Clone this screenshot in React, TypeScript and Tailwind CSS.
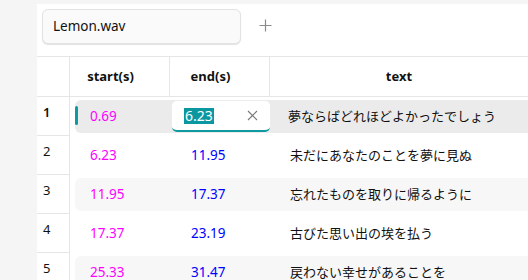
import React from 'react'

const rows = [
  { start: '0.69', end: '6.23', text: '夢ならばどれほどよかったでしょう' },
  { start: '6.23', end: '11.95', text: '未だにあなたのことを夢に見ぬ' },
  { start: '11.95', end: '17.37', text: '忘れたものを取りに帰るように' },
  { start: '17.37', end: '23.19', text: '古びた思い出の埃を払う' },
  { start: '25.33', end: '31.47', text: '戻わない幸せがあることを' },
]

const font = { fontFamily: '"Noto Sans", "Noto Sans CJK JP", sans-serif' }

const EditCell = ({ value }: { value: string }) => (
  <div className="w-[98px] h-[31px] ml-[2px] mr-[-2px] bg-white rounded-[5px] border-b-2 border-[#0e9a9f] shadow-[0_0_0_1px_#ececec] flex items-center pl-[12px] pr-[12px]">
    <span className="bg-[#0a97a0] text-white text-[14px] leading-[16px] px-[1px]">{value}</span>
    <svg className="ml-auto" width="11" height="11" viewBox="0 0 11 11">
      <path d="M1 1 L10 10 M10 1 L1 10" stroke="#777" strokeWidth="1.1" />
    </svg>
  </div>
)

export default function App() {
  return (
    <div className="w-[528px] h-[280px] flex bg-[#f5f5f5] overflow-hidden text-[#111]" style={font}>
      <div className="w-[37px] shrink-0" />
      <div className="flex-1 mt-[4px] bg-white flex flex-col overflow-hidden">
        <div className="h-[52px] shrink-0 flex items-start pt-[5px] pl-[5px]">
          <div className="w-[199px] h-[35px] rounded-[6px] bg-[#fafafa] border border-[#e3e3e3] shadow-[0_1px_1px_rgba(0,0,0,0.12)] flex items-center pl-[10px] text-[13.5px]">
            Lemon.wav
          </div>
          <div className="ml-[18px] mt-[10px] text-[#8a8a8a]">
            <svg width="13" height="13" viewBox="0 0 13 13">
              <path d="M6.5 0.5 V12.5 M0.5 6.5 H12.5" stroke="#8a8a8a" strokeWidth="1.2" />
            </svg>
          </div>
        </div>

        <div className="flex h-[41px] shrink-0 border-t border-b border-[#e6e6e6] text-[13px] font-bold">
          <div className="w-[33px] shrink-0 border-r border-[#e6e6e6]" />
          <div className="w-[100px] shrink-0 border-r border-[#e6e6e6] flex items-center justify-center pr-[18px]">start(s)</div>
          <div className="w-[100px] shrink-0 border-r border-[#e6e6e6] flex items-center justify-center pr-[18px]">end(s)</div>
          <div className="w-[278px] shrink-0 flex items-center justify-center pr-[20px]">text</div>
        </div>

        {rows.map((r, i) => {
          const selected = i === 0
          const striped = i % 2 === 0
          return (
            <div key={i} className="flex h-[39px] shrink-0">
              <div className={`w-[33px] shrink-0 border-r border-b border-[#e6e6e6] pl-[6px] pt-[6px] text-[13px] ${selected ? 'font-semibold' : ''}`}>{i + 1}</div>
              <div className={`relative flex flex-1 items-center my-[3px] ml-[5px] rounded-l-[6px] text-[13.5px] ${selected ? 'bg-[#ebebeb]' : striped ? 'bg-[#f7f7f7]' : 'bg-white'}`}>
                {selected && <div className="absolute left-0 top-[6px] w-[3px] h-[19px] rounded-[2px] bg-[#0e9a9f]" />}
                <div className="w-[95px] shrink-0 pl-[15px] text-[#ff00ff]">{r.start}</div>
                {selected ? (
                  <EditCell value={r.end} />
                ) : (
                  <div className="w-[100px] shrink-0 pl-[21px] text-[#0000ff]">{r.end}</div>
                )}
                <div className="pl-[20px] whitespace-nowrap text-[13px]">{r.text}</div>
              </div>
            </div>
          )
        })}
      </div>
    </div>
  )
}
